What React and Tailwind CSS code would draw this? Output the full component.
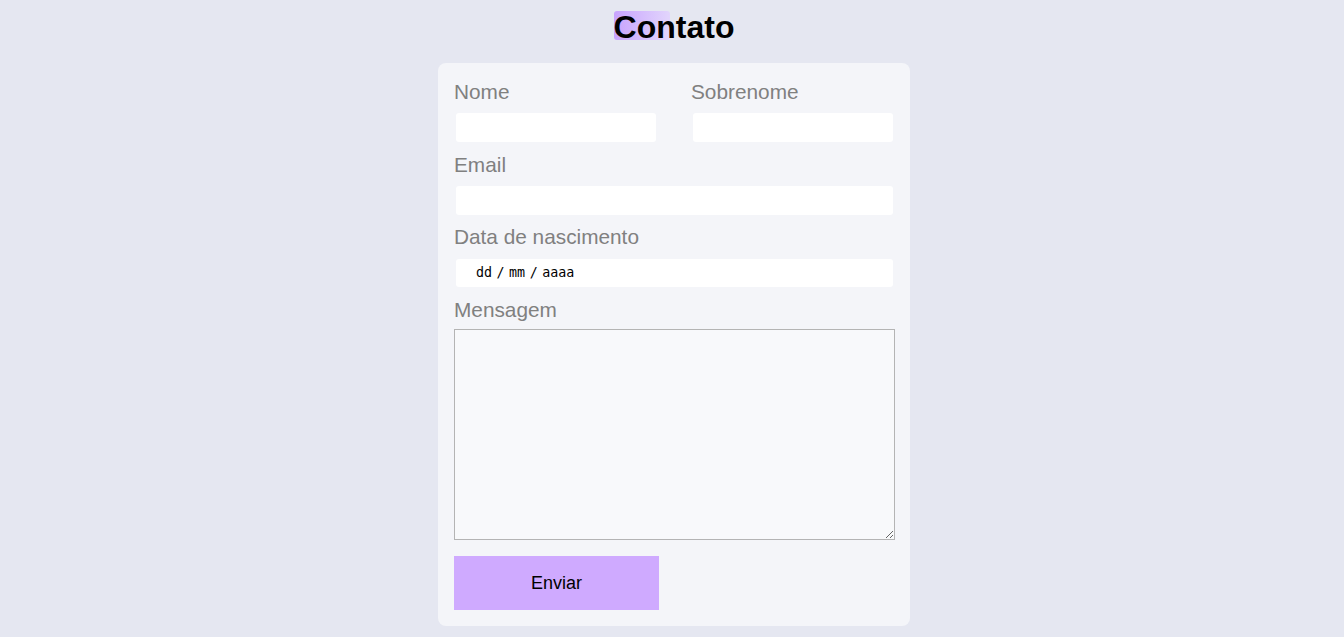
export default function App() {
  return (
    <div
      className="min-h-[637px] w-full bg-[#e5e7f1] flex flex-col items-center"
      style={{ fontFamily: '"Liberation Sans", Arial, sans-serif' }}
    >
      <h1 className="mt-[9px] ml-[4px] text-[32px] leading-[37px] font-bold text-black">
        <span className="relative inline-block">
          <span className="absolute left-0 top-[2px] w-[56px] h-[29px] rounded-[3px] bg-gradient-to-r from-[#c8a3fd] to-[#e2d5fc]"></span>
          <span className="relative">Contato</span>
        </span>
      </h1>
      <div className="mt-[17px] ml-[4px] w-[472px] rounded-lg bg-[#f4f5f9] pt-[18px] pb-4 pl-4 pr-[15px] flex flex-col">
        <div className="grid grid-cols-2 gap-x-[33px]">
          <div className="flex flex-col">
            <label className="text-[20.8px] leading-[22px] mb-[1px] text-[#808080]">Nome</label>
            <input className="mt-[9px] mx-[2px] h-[29px] rounded-[3px] bg-white outline-none" />
          </div>
          <div className="flex flex-col">
            <label className="text-[20.8px] leading-[22px] mb-[1px] text-[#808080]">Sobrenome</label>
            <input className="mt-[9px] mx-[2px] h-[29px] rounded-[3px] bg-white outline-none" />
          </div>
        </div>
        <label className="mt-[12px] text-[20.8px] leading-[22px] mb-[1px] text-[#808080]">Email</label>
        <input className="mt-[9px] mx-[2px] h-[29px] rounded-[3px] bg-white outline-none" />
        <label className="mt-[11px] text-[20.8px] leading-[22px] mb-[1px] text-[#808080]">Data de nascimento</label>
        <div
          className="mt-[10px] mx-[2px] h-[28px] rounded-[3px] bg-white flex items-center pl-[20px] text-[13.33px] text-black"
          style={{ fontFamily: '"DejaVu Sans Mono", monospace' }}
        >
          <span>dd</span>
          <span className="mx-[4.5px]">/</span>
          <span>mm</span>
          <span className="mx-[4.5px]">/</span>
          <span>aaaa</span>
        </div>
        <label className="mt-[12px] text-[20.8px] leading-[22px] mb-[1px] text-[#808080]">Mensagem</label>
        <textarea className="mt-[7px] h-[211px] w-full border border-[#b4b4b4] bg-[#f8f9fb] outline-none resize-y block"></textarea>
        <button className="mt-4 w-[205px] h-[54px] bg-[#cfaaff] text-[18px] text-black">Enviar</button>
      </div>
    </div>
  );
}
